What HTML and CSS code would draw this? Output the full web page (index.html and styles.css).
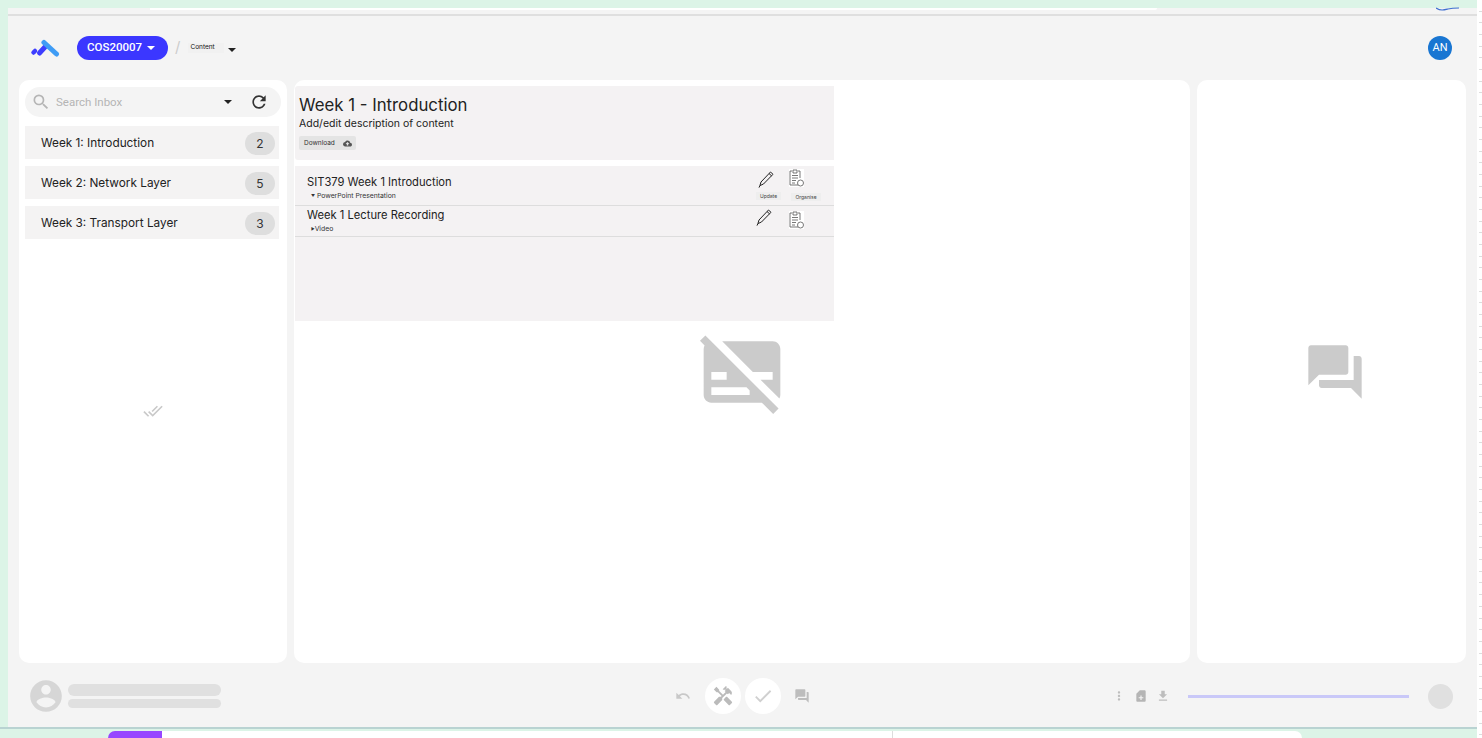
FILE: index.html
```html
<!DOCTYPE html>
<html lang="en">
<head>
  <meta charset="UTF-8">
  <meta name="viewport" content="width=device-width, initial-scale=1">
  <title>Content</title>
  <link rel="stylesheet" href="styles.css">
</head>
<body>
  <div class="strip-top">
    <svg class="squiggle" width="24" height="4" viewBox="0 0 24 4"><path d="M0 1c5 3 8 2 12 1s7-1 11-1" fill="none" stroke="#3f6fd0" stroke-width="1.2"/></svg>
  </div>

  <div class="app">
    <div class="app-edge"></div>
    <!-- top bar -->
    <header class="topbar">
      <svg class="logo" width="30" height="18" viewBox="0 0 30 18">
        <line x1="3.5" y1="13.5" x2="5" y2="12" stroke="#3d3dff" stroke-width="4.5" stroke-linecap="round"/>
        <line x1="9.5" y1="14" x2="15" y2="8" stroke="#3d3dff" stroke-width="5" stroke-linecap="round"/>
        <line x1="14" y1="3.5" x2="26.5" y2="15" stroke="#3f9cf5" stroke-width="5" stroke-linecap="round"/>
      </svg>
      <button class="unit-pill">COS20007 <span class="caret caret-white"></span></button>
      <span class="slash">/</span>
      <span class="crumb">Content</span>
      <span class="caret caret-dark"></span>
      <span class="avatar">AN</span>
    </header>

    <main class="panels">
      <!-- inbox list -->
      <section class="panel panel-left">
        <div class="search">
          <svg class="search-icon" width="20" height="20" viewBox="0 0 24 24"><path fill="#b5b5b5" d="M15.5 14h-.79l-.28-.27A6.47 6.47 0 0 0 16 9.5 6.5 6.5 0 1 0 9.5 16c1.61 0 3.09-.59 4.23-1.57l.27.28v.79l5 4.99L20.49 19l-4.99-5zm-6 0C7.01 14 5 11.99 5 9.5S7.01 5 9.5 5 14 7.01 14 9.5 11.99 14 9.5 14z"/></svg>
          <span class="search-text">Search Inbox</span>
          <span class="caret caret-dark search-caret"></span>
          <svg width="20" height="20" viewBox="0 0 24 24"><path fill="#333" d="M17.65 6.35C16.2 4.9 14.21 4 12 4c-4.42 0-7.99 3.58-7.99 8s3.57 8 7.99 8c3.73 0 6.84-2.55 7.73-6h-2.08c-.82 2.33-3.04 4-5.65 4-3.31 0-6-2.69-6-6s2.69-6 6-6c1.66 0 3.14.69 4.22 1.78L13 11h7V4l-2.35 2.35z"/></svg>
        </div>
        <ul class="weeks">
          <li class="week"><span>Week 1: Introduction</span><span class="badge">2</span></li>
          <li class="week"><span>Week 2: Network Layer</span><span class="badge">5</span></li>
          <li class="week"><span>Week 3: Transport Layer</span><span class="badge">3</span></li>
        </ul>
        <div class="all-done">
          <svg width="20" height="20" viewBox="0 0 24 24"><path fill="#c9c9c9" d="M18 7l-1.41-1.41-6.34 6.34 1.41 1.41L18 7zm4.24-1.41L11.66 16.17 7.48 12l-1.41 1.41L11.66 19l12-12-1.42-1.41zM.41 13.41L6 19l1.41-1.41L1.83 12 .41 13.41z"/></svg>
        </div>
      </section>

      <!-- content -->
      <section class="panel panel-mid">
        <div class="content-col">
          <div class="content-head">
            <h1>Week 1 - Introduction</h1>
            <p class="desc">Add/edit description of content</p>
            <span class="download">Download
              <svg width="9" height="9" viewBox="0 0 24 24"><path fill="#555" d="M19.35 10.04A7.49 7.49 0 0 0 12 4C9.11 4 6.6 5.64 5.35 8.04A5.994 5.994 0 0 0 0 14c0 3.31 2.69 6 6 6h13c2.76 0 5-2.24 5-5 0-2.64-2.05-4.78-4.65-4.96zM14 13v4h-4v-4H7l5-5 5 5h-3z"/></svg>
            </span>
          </div>
          <div class="content-list">
            <div class="item item-first">
              <div class="item-text">
                <div class="item-title">SIT379 Week 1 Introduction</div>
                <div class="item-sub"><span class="item-glyph">&#9660;</span> PowerPoint Presentation</div>
              </div>
              <div class="action action-edit">
                <svg width="20" height="20" viewBox="0 0 20 20"><path d="M5 13L14.5 3l2.5 2.3L7.5 15l-3.6 1.6zM3.9 16.6l-.9 2M13 4.5l2.6 2.4" fill="none" stroke="#222" stroke-width="1"/></svg>
                <span class="action-label">Update</span>
              </div>
              <div class="action action-sort">
                <svg class="clip-icon" width="15" height="18" viewBox="3 1 15 18"><path d="M6 3H4v14h8M12 3h2v7M7 2h4v3H7zM6 7.5h6M6 10h6M6 12.5h4M6 15h3" fill="none" stroke="#555" stroke-width=".8"/><circle cx="14.5" cy="15" r="3" fill="none" stroke="#555" stroke-width=".8"/></svg>
                <span class="action-label action-label-wide">Organise</span>
              </div>
            </div>
            <div class="item">
              <div class="item-text">
                <div class="item-title">Week 1 Lecture Recording</div>
                <div class="item-sub"><span class="item-glyph">&#9654;</span>Video</div>
              </div>
              <div class="action action-edit action-edit-low">
                <svg width="20" height="20" viewBox="0 0 20 20"><path d="M5 13L14.5 3l2.5 2.3L7.5 15l-3.6 1.6zM3.9 16.6l-.9 2M13 4.5l2.6 2.4" fill="none" stroke="#222" stroke-width="1"/></svg>
              </div>
              <div class="action action-sort action-sort-low">
                <svg class="clip-icon" width="15" height="18" viewBox="3 1 15 18"><path d="M6 3H4v14h8M12 3h2v7M7 2h4v3H7zM6 7.5h6M6 10h6M6 12.5h4M6 15h3" fill="none" stroke="#555" stroke-width=".8"/><circle cx="14.5" cy="15" r="3" fill="none" stroke="#555" stroke-width=".8"/></svg>
              </div>
            </div>
          </div>
        </div>
        <svg class="no-captions" width="92" height="92" viewBox="0 0 24 24"><path fill="#cbcbcb" d="M20 4H6.83l8 8H20v2h-3.17l4.93 4.93c.15-.28.24-.59.24-.93V6c0-1.1-.9-2-2-2zM1.04 3.87l1.2 1.2C2.09 5.35 2 5.66 2 6v12c0 1.1.9 2 2 2h13.17l2.96 2.96 1.41-1.41L2.45 2.45 1.04 3.87zM8 12v2H4v-2h4zm6 4.83V18H4v-2h9.17l.83.83z"/></svg>
      </section>

      <!-- comments -->
      <section class="panel panel-right">
        <svg width="64" height="64" viewBox="0 0 24 24"><path fill="#cbcbcb" d="M21 6h-2v9H6v2c0 .55.45 1 1 1h11l4 4V7c0-.55-.45-1-1-1zm-4 6V3c0-.55-.45-1-1-1H3c-.55 0-1 .45-1 1v14l4-4h10c.55 0 1-.45 1-1z"/></svg>
      </section>
    </main>

    <footer class="bottombar">
      <div class="student">
        <svg width="38" height="38" viewBox="0 0 24 24"><path fill="#d6d6d6" d="M12 2C6.48 2 2 6.48 2 12s4.48 10 10 10 10-4.48 10-10S17.52 2 12 2zm0 3c1.66 0 3 1.34 3 3s-1.34 3-3 3-3-1.34-3-3 1.34-3 3-3zm0 14.2c-2.5 0-4.71-1.28-6-3.22.03-1.99 4-3.08 6-3.08 1.99 0 5.97 1.09 6 3.08-1.29 1.94-3.5 3.22-6 3.22z"/></svg>
        <div class="student-bars">
          <div class="bar-name"></div>
          <div class="bar-id"></div>
        </div>
      </div>
      <div class="tools">
        <svg width="16" height="16" viewBox="0 0 24 24"><path fill="#c8c8c8" d="M12.5 8c-2.65 0-5.05.99-6.9 2.6L2 7v9h9l-3.62-3.62c1.39-1.16 3.16-1.88 5.12-1.88 3.54 0 6.55 2.31 7.6 5.5l2.37-.78C21.08 11.03 17.15 8 12.5 8z"/></svg>
        <span class="round-btn">
          <svg width="22" height="22" viewBox="0 0 24 24"><path fill="#bbb" d="M21.67 18.17l-5.3-5.3h-.99l-2.54 2.54v.99l5.3 5.3c.39.39 1.02.39 1.41 0l2.12-2.12c.39-.38.39-1.02 0-1.41zM17.34 10.19l1.41-1.41 2.12 2.12c1.17-1.17 1.17-3.07 0-4.24l-3.54-3.54-1.41 1.41V1.71l-.7-.71-3.54 3.54.71.71h2.83l-1.41 1.41 1.06 1.06-2.89 2.89-4.13-4.13V5.06L4.83 2.04 2 4.87 5.03 7.9h1.41l4.13 4.13-.85.85H7.6l-5.3 5.3c-.39.39-.39 1.02 0 1.41l2.12 2.12c.39.39 1.02.39 1.41 0l5.3-5.3v-2.12l5.15-5.15 1.06 1.05z"/></svg>
        </span>
        <span class="round-btn round-btn-last">
          <svg width="22" height="22" viewBox="0 0 24 24"><path fill="#d0d0d0" d="M9 16.17L4.83 12l-1.42 1.41L9 19 21 7l-1.41-1.41z"/></svg>
        </span>
        <svg width="16" height="16" viewBox="0 0 24 24"><path fill="#bdbdbd" d="M21 6h-2v9H6v2c0 .55.45 1 1 1h11l4 4V7c0-.55-.45-1-1-1zm-4 6V3c0-.55-.45-1-1-1H3c-.55 0-1 .45-1 1v14l4-4h10c.55 0 1-.45 1-1z"/></svg>
      </div>
      <div class="player">
        <svg width="14" height="14" viewBox="0 0 24 24"><path fill="#bdbdbd" d="M12 8c1.1 0 2-.9 2-2s-.9-2-2-2-2 .9-2 2 .9 2 2 2zm0 2c-1.1 0-2 .9-2 2s.9 2 2 2 2-.9 2-2-.9-2-2-2zm0 6c-1.1 0-2 .9-2 2s.9 2 2 2 2-.9 2-2-.9-2-2-2z"/></svg>
        <svg class="player-note" width="14" height="14" viewBox="0 0 24 24"><path fill="#b5b5b5" d="M10 2h8c1.1 0 2 .9 2 2v16c0 1.1-.9 2-2 2H6c-1.1 0-2-.9-2-2V8l6-6zm6 14v-2h-3v-3h-2v3H8v2h3v3h2v-3h3z"/></svg>
        <svg width="14" height="14" viewBox="0 0 24 24"><path fill="#bdbdbd" d="M19 9h-4V3H9v6H5l7 7 7-7zM5 18v2h14v-2H5z"/></svg>
        <div class="progress"></div>
        <span class="player-dot"></span>
      </div>
    </footer>
  </div>

  <div class="strip-bottom">
    <div class="tab-purple"></div>
    <div class="tab-white"></div>
  </div>

  <div class="edge-ticks"></div>
</body>
</html>
```

FILE: styles.css
```css
* {
  box-sizing: border-box;
}
html, body {
  height: 100%;
}
body {
  margin: 0;
  height: 738px;
  overflow: hidden;
  background-color: #dcf4e7;
  font-family: Inter, "Liberation Sans", sans-serif;
  color: #222;
  display: flex;
  flex-direction: column;
}

/* bits of other windows behind the app */
.strip-top {
  height: 8px;
  flex: none;
  display: flex;
  justify-content: flex-end;
  padding-right: 22px;
}
.squiggle {
  margin-top: 7px;
  position: relative;
  z-index: 1;
}
.strip-bottom {
  height: 11px;
  flex: none;
  display: flex;
  padding: 2px 0 0 108px;
  border-top: 2px solid #b9d3d2;
}
.tab-purple {
  width: 54px;
  background: #9747ff;
  border-radius: 22px 0 0 0;
}
.tab-white {
  width: 1140px;
  background: linear-gradient(to right, #fff 730px, #ddd 730px, #ddd 731px, #fff 731px);
  border-radius: 0 14px 0 0;
}
.edge-ticks {
  position: absolute;
  top: 0;
  right: 0;
  width: 5px;
  height: 738px;
  background: repeating-linear-gradient(to bottom, #fff 0, #fff 10.67px, #ddd 10.67px, #ddd 11.67px) right / 3px 100% no-repeat, #fff;
}

.app {
  margin-left: 8px;
  width: 1469px;
  height: 719px;
  flex: none;
  background: #f4f4f4;
  display: flex;
  flex-direction: column;
}
.app-edge {
  width: 1007px;
  height: 2px;
  flex: none;
  margin-left: 142px;
  background: #fff;
  border-radius: 0 0 8px 0;
}

/* top bar */
.topbar {
  height: 66px;
  flex: none;
  border-top: 2px solid #dfdfdf;
  margin-top: 4px;
  display: flex;
  align-items: center;
  padding: 0 25px 0 22px;
}
.logo {
  flex: none;
}
.unit-pill {
  margin-left: 17px;
  width: 91px;
  height: 24px;
  border: none;
  border-radius: 12px;
  background: #3b37ff;
  color: #fff;
  font-family: Roboto, "Liberation Sans", sans-serif;
  font-size: 11.5px;
  font-weight: 500;
  padding: 0 3px 2px 0;
}
.caret {
  display: inline-block;
  width: 0;
  height: 0;
  border-left: 4px solid transparent;
  border-right: 4px solid transparent;
  vertical-align: middle;
  margin-left: 2px;
}
.caret-white {
  border-top: 4px solid #fff;
}
.caret-dark {
  border-top: 4px solid #222;
}
.slash {
  margin-left: 7px;
  font-size: 15px;
  color: #ccc;
  margin-top: -4px;
}
.crumb {
  margin-left: 8px;
  width: 36px;
  height: 10px;
  background: #f1f1f1;
  padding-left: 2px;
  font-size: 6.5px;
  line-height: 8px;
  color: #111;
}
.topbar > .caret-dark {
  margin: 3px 0 0 4px;
}
.avatar {
  margin-left: auto;
  width: 24px;
  height: 24px;
  border-radius: 50%;
  background: #1976d2;
  color: #fff;
  font-family: Roboto, "Liberation Sans", sans-serif;
  font-size: 11px;
  line-height: 24px;
  text-align: center;
}

/* three white panels */
.panels {
  height: 583px;
  flex: none;
  display: flex;
  gap: 7px;
  padding: 0 11px;
}
.panel {
  background: #fff;
  border-radius: 10px;
}
.panel-left {
  width: 268px;
  padding: 7px 6px 0;
  display: flex;
  flex-direction: column;
}
.panel-mid {
  width: 896px;
  display: flex;
  flex-direction: column;
}
.panel-right {
  width: 269px;
  padding-left: 6px;
  display: flex;
  align-items: center;
  justify-content: center;
}

.search {
  height: 30px;
  flex: none;
  background: #f4f4f4;
  border-radius: 15px;
  display: flex;
  align-items: center;
  padding: 0 12px 0 6px;
}
.search-text {
  margin-left: 5px;
  font-family: Roboto, "Liberation Sans", sans-serif;
  font-size: 11.5px;
  color: #b5b5b5;
}
.search-caret {
  margin: 0 17px 0 auto;
}
.weeks {
  list-style: none;
  margin: 9px 2px 0 0;
  padding: 0;
}
.week {
  height: 33px;
  margin-bottom: 7px;
  background: #f4f3f3;
  display: flex;
  align-items: center;
  justify-content: space-between;
  padding: 0 4px 0 16px;
  font-size: 11.8px;
}
.badge {
  width: 30px;
  height: 23px;
  border-radius: 12px;
  background: #dedede;
  text-align: center;
  line-height: 23px;
  font-size: 12px;
  color: #333;
  margin-top: 1px;
}
.all-done {
  text-align: center;
  margin-top: 155px;
  line-height: 0;
}

/* content column */
.content-col {
  width: 539px;
  margin: 6px 0 0 1px;
  flex: none;
}
.content-head {
  height: 74px;
  background: #f4f2f3;
  border-radius: 3px 0 0 3px;
  padding: 9px 4px 0;
}
h1 {
  margin: 0;
  font-size: 16.8px;
  font-weight: 400;
  line-height: 20px;
}
.desc {
  margin: 2px 0 0;
  font-size: 10.5px;
  line-height: 14px;
}
.download {
  display: flex;
  align-items: center;
  gap: 8px;
  width: 57px;
  height: 14px;
  margin-top: 5px;
  padding-left: 5px;
  background: #e4e4e4;
  border-radius: 2px;
  font-size: 6.5px;
  color: #333;
}
.content-list {
  height: 155px;
  margin-top: 6px;
  background: #f4f2f3;
}
.item {
  display: flex;
  height: 31px;
  align-items: flex-start;
  border-bottom: 1px solid #dddddd;
  padding: 0 13px 0 12px;
}
.item-first {
  height: 40px;
}
.item-text {
  flex: 1;
  padding-top: 1px;
}
.item-first .item-text {
  padding-top: 8px;
}
.item-title {
  font-size: 11.2px;
  line-height: 16px;
  color: #222;
}
.item-sub {
  margin: 1px 0 0 4px;
  font-size: 6.8px;
  line-height: 10px;
  color: #333;
}
.item-glyph {
  font-size: 4px;
  vertical-align: middle;
}
.action {
  display: flex;
  flex-direction: column;
  align-items: flex-start;
  padding-top: 3px;
}
.action-edit {
  width: 30px;
}
.action-sort {
  width: 35px;
}
.clip-icon {
  margin: 0 0 2px 3px;
  background: #fff;
}
.action-edit-low {
  padding-top: 1px;
  margin-left: -2px;
  width: 32px;
}
.action-sort-low {
  padding-top: 5px;
}
.action-label {
  margin-top: 3px;
  width: 25px;
  text-align: center;
  padding: 1px 0;
  background: #eeeeee;
  font-size: 5px;
  line-height: 6px;
  color: #444;
}
.action-label-wide {
  width: 30px;
  margin-left: 5px;
  margin-top: 4px;
}
.no-captions {
  align-self: center;
  margin-top: 5px;
}

/* bottom bar */
.bottombar {
  flex: 1;
  display: grid;
  grid-template-columns: 1fr auto 1fr;
  align-items: center;
  padding: 2px 24px 0 19px;
}
.student {
  display: flex;
  align-items: center;
  gap: 3px;
}
.student-bars {
  width: 153px;
}
.bar-name {
  height: 12px;
  border-radius: 6px;
  background: #e0e0e0;
  margin-bottom: 3px;
}
.bar-id {
  height: 9px;
  border-radius: 5px;
  background: #e0e0e0;
}
.tools {
  display: flex;
  align-items: center;
  margin-left: 4px;
}
.round-btn {
  width: 36px;
  height: 36px;
  margin-left: 14px;
  border-radius: 50%;
  background: #fff;
  display: flex;
  align-items: center;
  justify-content: center;
}
.round-btn-last {
  margin: 0 13px 0 4px;
}
.player {
  display: flex;
  align-items: center;
  justify-content: flex-end;
  gap: 8px;
}
.progress {
  width: 221px;
  height: 3px;
  background: #c9c8f8;
  margin: 0 11px 0 10px;
}
.player-dot {
  width: 25px;
  height: 25px;
  border-radius: 50%;
  background: #e0e0e0;
}
```
